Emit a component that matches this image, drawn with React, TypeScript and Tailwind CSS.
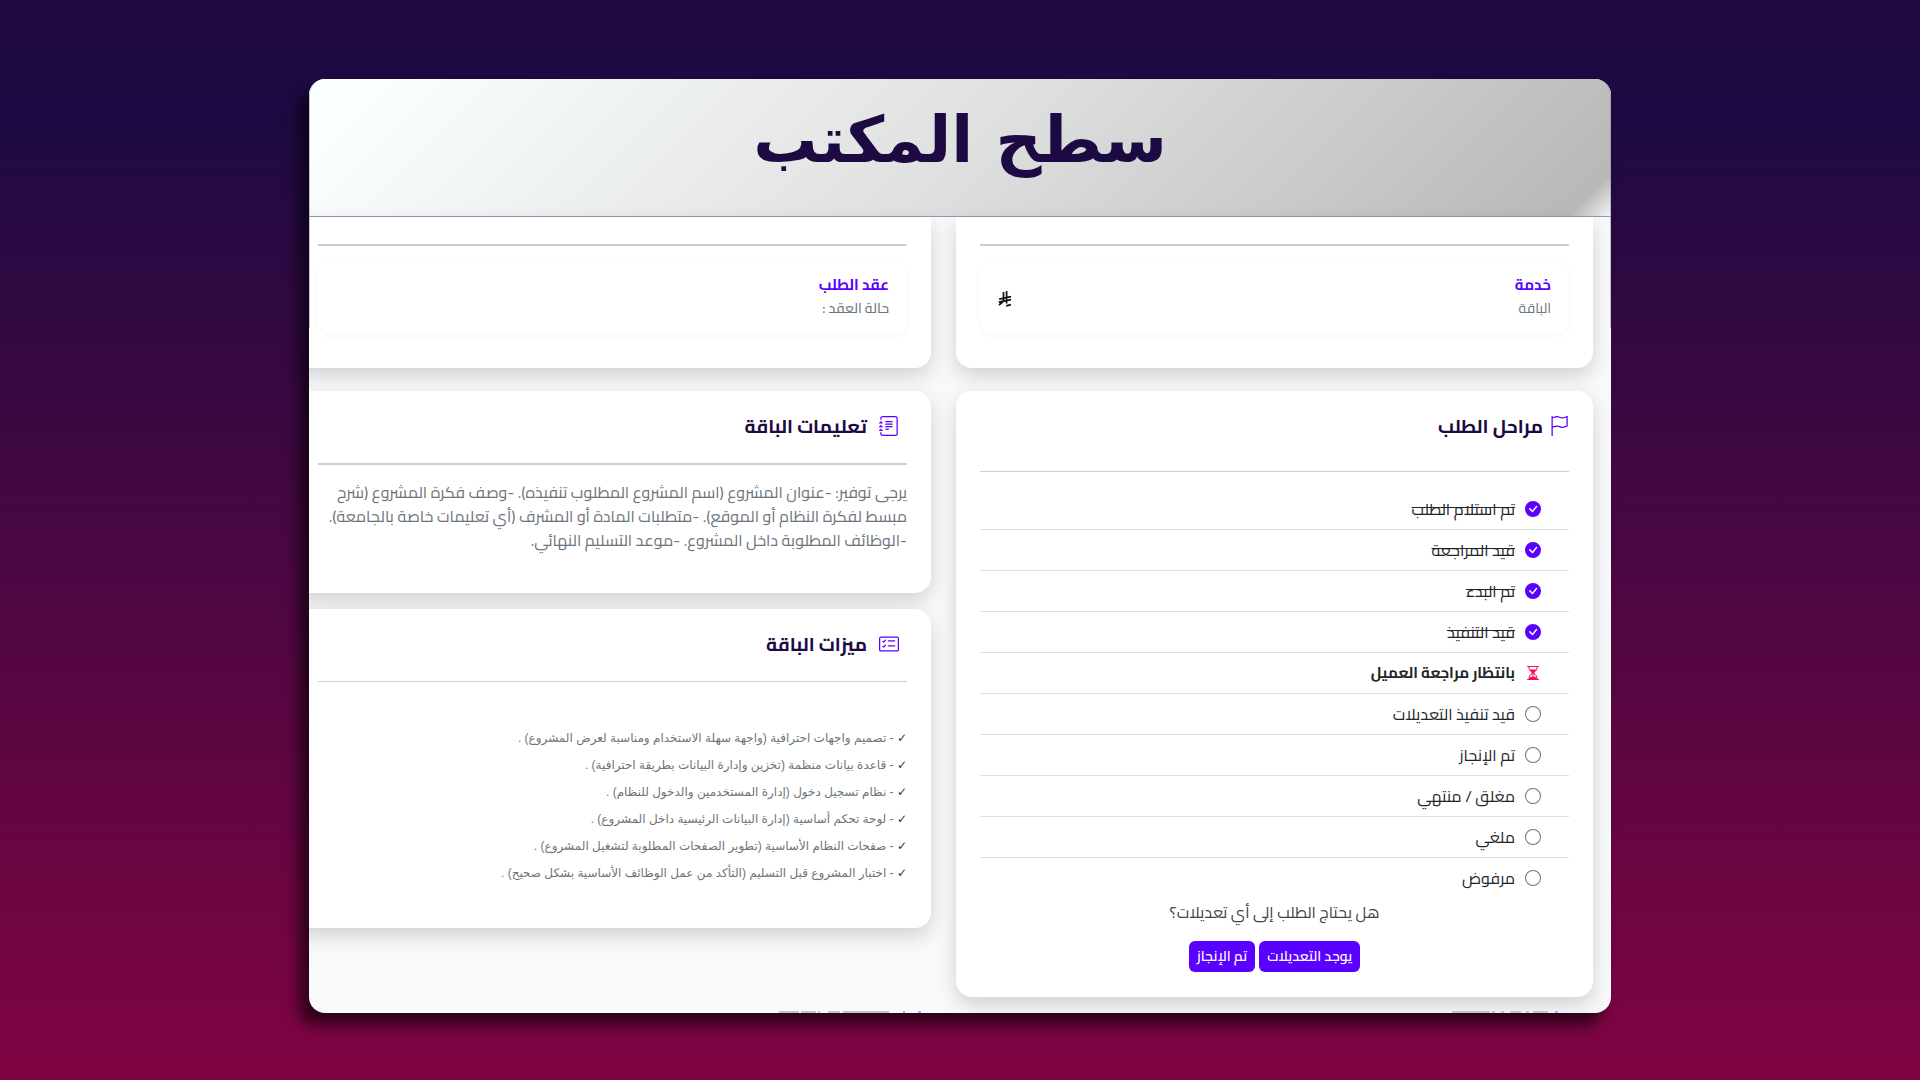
import { type ReactNode } from 'react';
import { BsCardChecklist, BsCheckCircleFill, BsCircle, BsFlag, BsHourglassSplit, BsJournalText } from 'react-icons/bs';
import { cva } from 'class-variance-authority';
import { clsx } from 'clsx';

type StepState = 'done' | 'current' | 'pending';

const steps: { label: string; state: StepState }[] = [
  { label: 'تم استلام الطلب', state: 'done' },
  { label: 'قيد المراجعة', state: 'done' },
  { label: 'تم البدء', state: 'done' },
  { label: 'قيد التنفيذ', state: 'done' },
  { label: 'بانتظار مراجعة العميل', state: 'current' },
  { label: 'قيد تنفيذ التعديلات', state: 'pending' },
  { label: 'تم الإنجاز', state: 'pending' },
  { label: 'مغلق / منتهي', state: 'pending' },
  { label: 'ملغي', state: 'pending' },
  { label: 'مرفوض', state: 'pending' },
];

const features = [
  'تصميم واجهات احترافية (واجهة سهلة الاستخدام ومناسبة لعرض المشروع) .',
  'قاعدة بيانات منظمة (تخزين وإدارة البيانات بطريقة احترافية) .',
  'نظام تسجيل دخول (إدارة المستخدمين والدخول للنظام) .',
  'لوحة تحكم أساسية (إدارة البيانات الرئيسية داخل المشروع) .',
  'صفحات النظام الأساسية (تطوير الصفحات المطلوبة لتشغيل المشروع) .',
  'اختبار المشروع قبل التسليم (التأكد من عمل الوظائف الأساسية بشكل صحيح) .',
];

const stepText = cva('leading-6 text-[#212529]', {
  variants: {
    state: {
      done: 'text-base line-through',
      current: 'text-[15px] font-bold',
      pending: 'text-base',
    },
  },
});

function Card({ className, children }: { className?: string; children: ReactNode }) {
  return (
    <section className={clsx('bg-white px-6 shadow-[0_8px_20px_rgba(0,0,0,0.16)]', className)}>
      {children}
    </section>
  );
}

function StepIcon({ state }: { state: StepState }) {
  if (state === 'done') return <BsCheckCircleFill className="size-4 text-[#5a00ff]" />;
  if (state === 'current') return <BsHourglassSplit className="size-4 text-[#ff0a54]" />;
  return <BsCircle className="size-4 text-[#6c757d]" />;
}

function RiyalIcon() {
  return (
    <svg viewBox="0 0 14 16" className="mt-1.5 h-4 w-3.5" fill="none" stroke="#111" strokeWidth="1.7">
      <path d="M5.5 1v9.2L1 14M8.6 0v12.5M1.2 8.2 13 5.6M.8 11.2 13 8.6M8.2 14.8l4.8-1.1" />
    </svg>
  );
}

function ClippedRow() {
  return (
    <svg width="100%" height="2" className="block" fill="#c3c2cc">
      <path d="M470 0h20v2h-20zM492 0h15v2h-15zM509 0h2v2h-2zM519 0h12v2h-12zM534 0h46v2h-46zM1143 0h38v2h-38zM1183 0h3v2h-3zM1192 0h3v2h-3zM1201 0h11v2h-11zM1217 0h3v2h-3zM1224 0h15v2h-15z" />
      <path fill="#b9a0ff" d="M594 0h2v2h-2zM609 0h3v2h-3zM1246 0h3v2h-3z" />
    </svg>
  );
}

export default function App() {
  return (
    <div
      dir="rtl"
      className="flex h-screen flex-col items-center overflow-hidden bg-linear-[180deg,#1f0a40,#1c0a42_10%,#800442] px-6 pt-[79px] pb-[67px] font-['Cairo','Noto_Sans_Arabic','DejaVu_Sans',sans-serif]"
    >
      <main className="relative flex min-h-0 w-full max-w-[1302px] flex-1 flex-col overflow-hidden rounded-2xl bg-[#f8f9fb] shadow-[-10px_12px_14px_rgba(0,0,0,0.6)]">
        <header className="flex h-[138px] shrink-0 items-center justify-center border-b border-[#9c93b3] bg-linear-[135deg,#fbffff_4%,#dfe1e0_50%,#b8b8b8_97%,#f4f4f4]">
          <h1 className="pb-4 font-['DejaVu_Sans',sans-serif] text-[64px] leading-[96px] font-bold text-[#1d0a42]">سطح المكتب</h1>
        </header>

        <div className="-ml-[15px] flex flex-col gap-[23px] pr-[18px]">
          <div className="grid grid-cols-2 gap-[25px]">
            <Card className="rounded-b-2xl pt-[27px] pb-[35px]">
              <hr className="border-t-2 border-[#cfcfcf]" />
              <div className="mt-[15px] flex items-center justify-between rounded-xl bg-white px-[18px] pt-3 pb-[14px] shadow-[0_2px_6px_rgba(0,0,0,0.04)]">
                <div>
                  <h2 className="text-[15px] leading-6 font-bold text-[#5a00ff]">خدمة</h2>
                  <p className="text-sm leading-[22px] text-[#6c757d]">الباقة</p>
                </div>
                <RiyalIcon />
              </div>
            </Card>
            <Card className="rounded-b-2xl pt-[27px] pb-[35px]">
              <hr className="border-t-2 border-[#cfcfcf]" />
              <div className="mt-[15px] rounded-xl bg-white px-[18px] pt-3 pb-[14px] shadow-[0_2px_6px_rgba(0,0,0,0.04)]">
                <h2 className="text-[15px] leading-6 font-bold text-[#5a00ff]">عقد الطلب</h2>
                <p className="text-sm leading-[22px] font-medium text-[#6c757d]">حالة العقد :</p>
              </div>
            </Card>
          </div>

          <div className="grid grid-cols-2 items-start gap-[25px]">
            <Card className="rounded-2xl pt-5 pb-[25px]">
              <h2 className="flex items-center gap-1.5 text-[19px] leading-[30px] font-bold text-[#1d0a42]">
                <BsFlag className="size-5 text-[#5a00ff]" />
                مراحل الطلب
              </h2>
              <hr className="mt-[30px] border-[#cfcfcf]" />
              <ul className="mt-[17px]">
                {steps.map((step) => (
                  <li
                    key={step.label}
                    className="flex items-center gap-2.5 border-b border-[#dedede] px-7 py-2 last:border-b-0"
                  >
                    <StepIcon state={step.state} />
                    <span className={stepText({ state: step.state })}>{step.label}</span>
                  </li>
                ))}
              </ul>
              <p className="mt-0.5 text-center leading-6 text-[#444]">هل يحتاج الطلب إلى أي تعديلات؟</p>
              <div className="mt-[17px] flex justify-center gap-1 text-sm leading-[21px] font-semibold text-white">
                <button type="button" className="rounded-md bg-[#5a00ff] px-2 py-[5px]">يوجد التعديلات</button>
                <button type="button" className="rounded-md bg-[#5a00ff] px-2 py-[5px]">تم الإنجاز</button>
              </div>
            </Card>

            <div className="flex flex-col gap-4">
              <Card className="rounded-2xl pt-5 pb-[41px]">
                <h2 className="flex items-center gap-3 px-2 text-[19px] leading-[30px] font-bold text-[#1d0a42]">
                  <BsJournalText className="size-5 text-[#5a00ff]" />
                  تعليمات الباقة
                </h2>
                <hr className="mt-[22px] border-t-2 border-[#cfcfcf]" />
                <p className="mt-[15px] text-base leading-6 text-[#6c757d]">
                  يرجى توفير: -عنوان المشروع (اسم المشروع المطلوب تنفيذه). -وصف فكرة المشروع (شرح مبسط
                  لفكرة النظام أو الموقع). -متطلبات المادة أو المشرف (أي تعليمات خاصة بالجامعة).
                  -الوظائف المطلوبة داخل المشروع. -موعد التسليم النهائي.
                </p>
              </Card>
              <Card className="rounded-2xl pt-5 pb-[41px]">
                <h2 className="flex items-center gap-3 px-2 text-[19px] leading-[30px] font-bold text-[#1d0a42]">
                  <BsCardChecklist className="size-5 text-[#5a00ff]" />
                  ميزات الباقة
                </h2>
                <hr className="mt-[22px] border-[#cfcfcf]" />
                <ul className="mt-[43px] font-['Liberation_Sans','DejaVu_Sans',sans-serif] text-xs leading-[27px] text-[#6c757d]">
                  {features.map((feature) => (
                    <li key={feature}>
                      <span className="text-[#333]">✓</span> - {feature}
                    </li>
                  ))}
                </ul>
              </Card>
            </div>
          </div>
        </div>

        <div className="absolute inset-x-0 bottom-0" dir="ltr">
          <ClippedRow />
        </div>
        <div className="pointer-events-none absolute inset-x-0 top-0 h-[249px] rounded-t-2xl border-x border-[#8f86a8]/50" />
      </main>
    </div>
  );
}
